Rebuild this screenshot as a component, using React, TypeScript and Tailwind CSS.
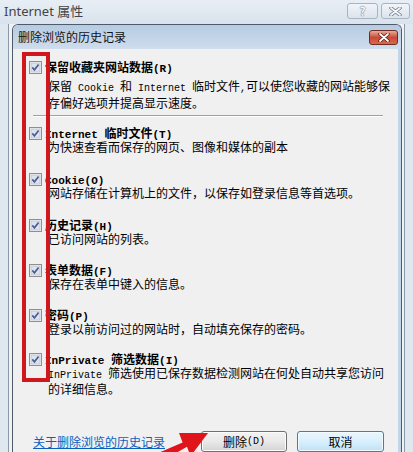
import React from "react"

// small helpers for the SimSun-like half-width latin text
function M({ children }: { children: React.ReactNode }) {
  return <span className="font-['Liberation_Mono',monospace] text-[10px]">{children}</span>
}

function MB({ children }: { children: React.ReactNode }) {
  return <span className="font-['Liberation_Mono',monospace] text-[11px] font-bold">{children}</span>
}

function CheckBox() {
  return (
    <svg width="13" height="13" viewBox="0 0 13 13" className="shrink-0">
      <rect x="0.5" y="0.5" width="12" height="12" fill="#f6f6f6" stroke="#8e8f8f" />
      <rect x="2" y="2" width="9" height="9" fill="#dde3ec" stroke="#b9c2cf" strokeWidth="0.8" />
      <path d="M3.3 6.4 L5.4 8.8 L9.6 3.4" fill="none" stroke="#4a5e98" strokeWidth="1.7" />
    </svg>
  )
}

interface ItemProps {
  title: React.ReactNode
  children: React.ReactNode
  className?: string
}

function Item({ title, children, className = "" }: ItemProps) {
  return (
    <div className={`flex flex-col ${className}`}>
      <div className="flex h-[13px] items-center pl-[16px]">
        <CheckBox />
        <span className="ml-[3px] whitespace-nowrap text-[12px] font-bold leading-[13px]">{title}</span>
      </div>
      <div className="whitespace-nowrap pl-[35px] text-[12px] leading-[13px]">{children}</div>
    </div>
  )
}

export default function App() {
  return (
    <div className="relative h-[452px] w-[413px] overflow-hidden bg-[#dfe7ef] font-['Noto_Sans_CJK_SC',sans-serif] text-black">
      {/* outer window title bar */}
      <div className="flex h-[24px] items-center justify-between bg-gradient-to-b from-[#e8eef5] to-[#d9e3ed] pl-[4px] pr-[3px]">
        <span className="font-['Noto_Sans','Noto_Sans_CJK_SC',sans-serif] text-[13px] text-[#444]">Internet 属性</span>
        <div className="flex gap-[3px] self-start pt-[3px]">
          <div className="flex h-[16px] w-[31px] items-center justify-center rounded-[3px] border border-[#a7b4c2] bg-gradient-to-b from-[#f1f5f9] to-[#dbe3ec]">
            <span className="text-[12px] font-bold leading-none text-[#f8f9fb] [text-shadow:0_0_1px_#55667a,0_0_1px_#55667a]">?</span>
          </div>
          <div className="flex h-[16px] w-[29px] items-center justify-center rounded-[3px] border border-[#a7b4c2] bg-gradient-to-b from-[#f1f5f9] to-[#dbe3ec]">
            <svg width="13" height="9" viewBox="0 0 13 9">
              <path d="M2 1 L11 8 M11 1 L2 8" stroke="#6b7a8c" strokeWidth="3.4" strokeLinecap="round" />
              <path d="M2 1 L11 8 M11 1 L2 8" stroke="#f6f8fa" strokeWidth="1.8" strokeLinecap="round" />
            </svg>
          </div>
        </div>
      </div>

      <div className="flex h-[428px]">
        <div className="w-[8px]" />
        <div className="flex flex-1 border-x border-[#8a99aa] bg-[#f2f2f2] pl-[3px] pr-[2px]">
          {/* dialog */}
          <div className="flex flex-1 flex-col overflow-hidden rounded-t-[6px] border-x border-t border-[#4d5b6b]">
            <div className="flex h-[25px] items-center justify-between bg-gradient-to-b from-[#b6cbe2] to-[#cfdded] pl-[5px] pr-[3px]">
              <span className="text-[12px] text-[#111]">删除浏览的历史记录</span>
              <div className="flex h-[15px] w-[29px] items-center justify-center rounded-[3px] border border-[#6e2b22] bg-gradient-to-b from-[#e9a999] via-[#c94a33] to-[#d66a4f]">
                <svg width="12" height="9" viewBox="0 0 12 9">
                  <path d="M2 1 L10 8 M10 1 L2 8" stroke="#5a1d14" strokeWidth="3.4" strokeLinecap="round" />
                  <path d="M2 1 L10 8 M10 1 L2 8" stroke="#ffffff" strokeWidth="1.8" strokeLinecap="round" />
                </svg>
              </div>
            </div>

            <div className="flex flex-1 flex-col border-r-[3px] border-[#c2d6ea] bg-[#f0f0f0] pt-[12px]">
              <div className="flex flex-col">
                <div className="flex h-[13px] items-center pl-[16px]">
                  <CheckBox />
                  <span className="ml-[3px] whitespace-nowrap text-[12px] font-bold leading-[13px]">
                    保留收藏夹网站数据<MB>(R)</MB>
                  </span>
                </div>
                <div className="mt-[5px] whitespace-nowrap pl-[35px] text-[12px] leading-[14px]">
                  保留<M>{" Cookie "}</M>和<M>{" Internet "}</M>临时文件<M>,</M>可以使您收藏的网站能够保
                  <br />
                  存偏好选项并提高显示速度。
                </div>
              </div>

              <div className="ml-[20px] mt-[5px] w-[350px] border-t border-b border-t-[#a0a0a0] border-b-[#ffffff]" />

              <Item className="mt-[10px]" title={<><MB>{"Internet "}</MB>临时文件<MB>(T)</MB></>}>
                为快速查看而保存的网页、图像和媒体的副本
              </Item>

              <Item className="mt-[20px]" title={<MB>Cookie(O)</MB>}>
                网站存储在计算机上的文件，以保存如登录信息等首选项。
              </Item>

              <Item className="mt-[20px]" title={<>历史记录<MB>(H)</MB></>}>
                已访问网站的列表。
              </Item>

              <Item className="mt-[19px]" title={<>表单数据<MB>(F)</MB></>}>
                保存在表单中键入的信息。
              </Item>

              <Item className="mt-[19px]" title={<>密码<MB>(P)</MB></>}>
                登录以前访问过的网站时，自动填充保存的密码。
              </Item>

              <Item className="mt-[18px]" title={<><MB>{"InPrivate "}</MB>筛选数据<MB>(I)</MB></>}>
                <M>{"InPrivate "}</M>筛选使用已保存数据检测网站在何处自动共享您访问
                <br />
                的详细信息。
              </Item>

              {/* footer */}
              <div className="mt-[36px] flex items-center pl-[20px] pr-[14px]">
                <a href="#" className="text-[12px] leading-none text-[#0b5fbf] underline">
                  关于删除浏览的历史记录
                </a>
                <div className="ml-auto flex gap-[10px]">
                  <button className="flex h-[21px] w-[86px] items-center justify-center rounded-[3px] border border-[#707070] bg-gradient-to-b from-[#f3f3f3] via-[#e9e9e9] to-[#d4d4d4] text-[12px] leading-none shadow-[inset_0_0_0_1px_#fcfcfc]">
                    删除<M>(D)</M>
                  </button>
                  <button className="flex h-[21px] w-[87px] items-center justify-center rounded-[3px] border border-[#3c7fb1] bg-gradient-to-b from-[#eaf6fd] via-[#d9f0fc] to-[#bde2f6] text-[12px] leading-none shadow-[inset_0_0_0_1px_#f4fbff]">
                    取消
                  </button>
                </div>
              </div>
            </div>
          </div>
        </div>
        <div className="w-[8px]" />
      </div>

      {/* red annotation box */}
      <div className="absolute left-[22px] top-[52px] h-[330px] w-[28px] border-[4px] border-[#cf181d]" />

      {/* red annotation arrow */}
      <svg className="absolute left-0 top-0" width="413" height="452" viewBox="0 0 413 452">
        <polygon
          points="208,433 179,433 182.6,442.4 147.8,457.5 152.2,466.5 187,446.8 190.6,456.2"
          fill="#e0141b"
        />
      </svg>
    </div>
  )
}
